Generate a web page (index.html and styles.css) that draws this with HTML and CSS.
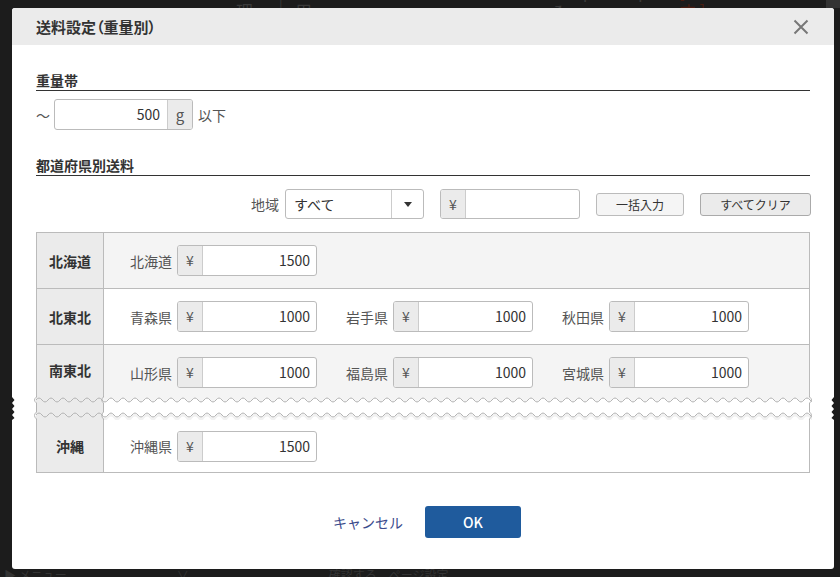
FILE: index.html
```html
<!DOCTYPE html>
<html lang="ja">
<head>
<meta charset="utf-8">
<title>送料設定（重量別）</title>
<link rel="stylesheet" href="styles.css">
</head>
<body>
<div class="bg-page">
  <div class="bg-top">
    <span class="bg-nav">管理</span><span class="bg-sep">|</span><span class="bg-nav">運用</span>
    <span class="bg-shop">SampleShop1 ↗</span>
    <span class="bg-open">[ 開店しています ]</span>
    <span class="bg-icon"></span>
  </div>
  <div class="bg-bottom">
    <span>▶ メニュー</span><span class="bg-b2">∨</span><span class="bg-b3">確認する　ページ設定</span>
  </div>
</div>

<div class="modal">
  <div class="modal-header">
    <div class="modal-title">送料設定（重量別）</div>
    <svg class="close" width="16" height="16" viewBox="0 0 16 16"><path d="M1.5 1.5 L14.5 14.5 M14.5 1.5 L1.5 14.5" stroke="#777" stroke-width="2" fill="none"/></svg>
  </div>
  <div class="modal-body">
    <div class="section-title">重量帯</div>
    <div class="weight-row">
      <span class="tilde">〜</span>
      <div class="input-group weight">
        <span class="ig-field">500</span>
        <span class="ig-addon addon-right">g</span>
      </div>
      <span class="below">以下</span>
    </div>

    <div class="section-title second">都道府県別送料</div>
    <div class="filter-row">
      <span class="filter-label">地域</span>
      <div class="select">
        <span class="select-text">すべて</span>
        <span class="select-arrow"><svg width="8" height="5" viewBox="0 0 8 5"><path d="M0 0 H8 L4 5 Z" fill="#333"/></svg></span>
      </div>
      <div class="input-group bulk">
        <span class="ig-addon">¥</span>
        <span class="ig-field"></span>
      </div>
      <button class="btn-small">一括入力</button>
      <button class="btn-small btn-clear">すべてクリア</button>
    </div>

    <div class="price-table">
      <div class="row">
        <div class="row-head">北海道</div>
        <div class="row-body alt">
          <div class="pref"><span class="pref-label">北海道</span><div class="input-group price"><span class="ig-addon">¥</span><span class="ig-field">1500</span></div></div>
        </div>
      </div>
      <div class="row">
        <div class="row-head">北東北</div>
        <div class="row-body">
          <div class="pref"><span class="pref-label">青森県</span><div class="input-group price"><span class="ig-addon">¥</span><span class="ig-field">1000</span></div></div>
          <div class="pref"><span class="pref-label">岩手県</span><div class="input-group price"><span class="ig-addon">¥</span><span class="ig-field">1000</span></div></div>
          <div class="pref"><span class="pref-label">秋田県</span><div class="input-group price"><span class="ig-addon">¥</span><span class="ig-field">1000</span></div></div>
        </div>
      </div>
      <div class="row row-cut">
        <div class="row-head head-cut">南東北</div>
        <div class="row-body alt body-cut">
          <div class="pref"><span class="pref-label">山形県</span><div class="input-group price"><span class="ig-addon">¥</span><span class="ig-field">1000</span></div></div>
          <div class="pref"><span class="pref-label">福島県</span><div class="input-group price"><span class="ig-addon">¥</span><span class="ig-field">1000</span></div></div>
          <div class="pref"><span class="pref-label">宮城県</span><div class="input-group price"><span class="ig-addon">¥</span><span class="ig-field">1000</span></div></div>
        </div>
      </div>
    </div>

    <div class="table-break">
      <svg width="822" height="24" viewBox="0 0 822 24">
        <defs>
          <pattern id="waveTop" width="12" height="8" patternUnits="userSpaceOnUse">
            <path d="M0,0 H12 V4 Q9,8 6,4 Q3,0 0,4 Z" fill="#f4f4f4"/>
            <path d="M0,4 Q3,0 6,4 Q9,8 12,4" fill="none" stroke="#b3b3b3" stroke-width="1"/>
          </pattern>
          <pattern id="waveLine" width="12" height="8" patternUnits="userSpaceOnUse">
            <path d="M0,4 Q3,0 6,4 Q9,8 12,4" fill="none" stroke="#b3b3b3" stroke-width="1"/>
          </pattern>
          <pattern id="waveLine2" width="12" height="9" patternUnits="userSpaceOnUse" y="15">
            <path d="M0,4 Q3,0 6,4 Q9,8 12,4" fill="none" stroke="#b3b3b3" stroke-width="1"/>
          </pattern>
          <pattern id="waveBottom" width="12" height="9" patternUnits="userSpaceOnUse" y="15">
            <path d="M0,4.5 Q3,0.5 6,4.5 Q9,8.5 12,4.5 V7.5 Q9,11.5 6,7.5 Q3,3.5 0,7.5 Z" fill="#f1f1f1"/>
            <path d="M0,4 Q3,0 6,4 Q9,8 12,4" fill="none" stroke="#b3b3b3" stroke-width="1"/>
          </pattern>
        </defs>
        <rect x="24" y="0" width="67" height="24" fill="#ebebeb"/>
        <rect x="91" y="0" width="707" height="8" fill="url(#waveTop)"/>
        <rect x="24" y="0" width="67" height="8" fill="url(#waveLine)"/>
        <rect x="24" y="15" width="67" height="9" fill="url(#waveLine2)"/>
        <rect x="91" y="15" width="709" height="9" fill="url(#waveBottom)"/>
        <rect x="798" y="0" width="2" height="8" fill="url(#waveLine)"/>
        <path d="M24.5,0 V1 Q20.5,4 24.5,7 V16 Q20.5,19.5 24.5,23 V24" fill="none" stroke="#b3b3b3"/>
        <path d="M91.5,0 V1 Q88,4 91.5,7 V16 Q88,19.5 91.5,23 V24" fill="none" stroke="#b3b3b3"/>
        <path d="M797.5,0 V1 Q801.5,4 797.5,7 V16 Q801.5,19.5 797.5,23 V24" fill="none" stroke="#b3b3b3"/>
        <polygon points="0,1 2.5,4 0,7 2.5,10 0,13 2.5,16 0,19 2.5,22 0,24" fill="#1c1c1c"/>
        <polygon points="822,1 819.5,4 822,7 819.5,10 822,13 819.5,16 822,19 819.5,22 822,24" fill="#1c1c1c"/>
      </svg>
    </div>

    <div class="price-table tail">
      <div class="row row-tail">
        <div class="row-head">沖縄</div>
        <div class="row-body">
          <div class="pref"><span class="pref-label">沖縄県</span><div class="input-group price"><span class="ig-addon">¥</span><span class="ig-field">1500</span></div></div>
        </div>
      </div>
    </div>

    <div class="modal-footer">
      <button class="btn-cancel">キャンセル</button>
      <button class="btn-ok">OK</button>
    </div>
  </div>
</div>
</body>
</html>
```

FILE: styles.css
```css
* {
  box-sizing: border-box;
}

html, body {
  margin: 0;
  padding: 0;
}

body {
  width: 840px;
  height: 577px;
  overflow: hidden;
  position: relative;
  background: #1c1c1c;
  font-family: "Noto Sans CJK JP", "Noto Sans", sans-serif;
  color: #333;
}

/* background page (dimmed) */
.bg-page {
  height: 577px;
  display: flex;
  flex-direction: column;
  justify-content: space-between;
}

.bg-top {
  display: flex;
  align-items: center;
  height: 20px;
  margin-top: -9px;
  padding-left: 236px;
  font-size: 17px;
  line-height: 20px;
  color: #3a3a3a;
}

.bg-sep {
  margin: 0 12px;
  color: #333;
}

.bg-shop {
  margin-left: 222px;
}

.bg-open {
  margin-left: 14px;
  color: #4a1c10;
}

.bg-icon {
  margin-left: 24px;
  width: 16px;
  height: 14px;
  background: #333;
}

.bg-bottom {
  display: flex;
  height: 12px;
  padding-left: 4px;
  font-size: 12px;
  line-height: 20px;
  color: #333;
  overflow: hidden;
}

.bg-b2 {
  margin-left: 110px;
}

.bg-b3 {
  margin-left: 140px;
}

/* modal */
.modal {
  position: absolute;
  left: 12px;
  top: 8px;
  width: 822px;
  height: 561px;
  background: #fff;
  border-radius: 3px;
  overflow: hidden;
}

.modal-header {
  height: 37px;
  background: #ebebeb;
  display: flex;
  align-items: center;
  justify-content: space-between;
  padding: 0 25px 0 24px;
}

.modal-title {
  font-size: 15px;
  font-weight: bold;
  color: #333;
  font-feature-settings: "palt";
  line-height: 20px;
}

.close {
  display: block;
}

.modal-body {
  padding: 26px 24px 0;
}

.section-title {
  font-size: 14px;
  font-weight: bold;
  line-height: 18px;
  padding-bottom: 1px;
  border-bottom: 1px solid #333;
  color: #333;
}

.section-title.second {
  margin-top: 26px;
}

.weight-row {
  display: flex;
  align-items: center;
  margin-top: 8px;
  font-size: 14px;
  color: #555;
}

.tilde {
  width: 14px;
  margin-right: 4px;
  text-align: center;
  font-size: 14px;
}

.below {
  margin-left: 5px;
}

.input-group {
  display: flex;
  height: 31px;
  border: 1px solid #bbb;
  border-radius: 3px;
  overflow: hidden;
  background: #fff;
}

.ig-field {
  flex: 1;
  text-align: right;
  padding-right: 6px;
  font-size: 14px;
  line-height: 29px;
  color: #333;
}

.ig-addon {
  width: 25px;
  flex: none;
  background: #ebebeb;
  border-right: 1px solid #ccc;
  text-align: center;
  font-size: 14px;
  line-height: 29px;
  color: #555;
}

.ig-addon.addon-right {
  border-right: none;
  border-left: 1px solid #ccc;
  font-size: 15px;
}

.input-group.weight {
  width: 139px;
}

.input-group.weight .ig-field {
  padding-right: 7px;
}

/* filter row */
.filter-row {
  display: flex;
  justify-content: flex-end;
  align-items: center;
  margin-top: 13px;
  height: 30px;
  margin-right: -1px;
}

.filter-label {
  font-size: 14px;
  color: #555;
  margin-right: 6px;
}

.select {
  display: flex;
  width: 139px;
  height: 30px;
  border: 1px solid #bbb;
  border-radius: 3px;
  background: #fff;
}

.select-text {
  flex: 1;
  padding-left: 8px;
  font-size: 14px;
  line-height: 28px;
  color: #333;
}

.select-arrow {
  width: 32px;
  border-left: 1px solid #ccc;
  display: flex;
  align-items: center;
  justify-content: center;
}

.select-arrow svg {
  display: block;
}

.input-group.bulk {
  width: 140px;
  height: 30px;
  margin-left: 16px;
}

.input-group.bulk .ig-addon,
.input-group.bulk .ig-field {
  line-height: 28px;
}

.btn-small {
  margin-left: 16px;
  width: 88px;
  height: 23px;
  padding: 0;
  border: 1px solid #bbb;
  border-radius: 3px;
  background: #f5f5f5;
  font-family: inherit;
  font-size: 12px;
  color: #333;
  line-height: 21px;
}

.btn-clear {
  width: 111px;
  background: #ebebeb;
  border-color: #aaa;
}

/* price table */
.price-table {
  margin-top: 13px;
  border: 1px solid #bbb;
  border-bottom: none;
}

.price-table.tail {
  margin-top: 0;
  border-top: none;
  border-bottom: 1px solid #bbb;
}

.row {
  display: flex;
  height: 56px;
  border-top: 1px solid #bbb;
}

.row:first-child {
  border-top: none;
  height: 55px;
}

.row.row-cut {
  height: 52px;
}

.row.row-tail {
  border-top: none;
  height: 52px;
}

.row-head {
  width: 67px;
  flex: none;
  background: #ebebeb;
  border-right: 1px solid #bbb;
  display: flex;
  align-items: center;
  justify-content: center;
  font-size: 14px;
  font-weight: bold;
  color: #333;
}

.row-head.head-cut {
  align-items: flex-start;
  padding-top: 15px;
}

.row-body {
  flex: 1;
  display: flex;
  align-items: center;
  gap: 29px;
  padding-left: 26px;
  background: #fff;
}

.row-body.alt {
  background: #f4f4f4;
}

.row-body.body-cut {
  align-items: flex-start;
  padding-top: 12px;
}

.pref {
  display: flex;
  align-items: center;
  gap: 5px;
}

.pref-label {
  font-size: 14px;
  color: #555;
}

.input-group.price {
  width: 140px;
}

.table-break {
  margin: 0 -24px;
  height: 24px;
}

.table-break svg {
  display: block;
}

/* footer */
.modal-footer {
  display: flex;
  justify-content: center;
  gap: 9px;
  margin-top: 33px;
  padding-right: 5px;
}

.btn-cancel {
  width: 96px;
  height: 32px;
  padding: 0;
  border: none;
  background: none;
  font-family: inherit;
  font-size: 14px;
  color: #3b4b8c;
}

.btn-ok {
  width: 96px;
  height: 32px;
  padding: 0;
  border: none;
  border-radius: 3px;
  background: #1f5b9d;
  font-family: inherit;
  font-size: 14px;
  font-weight: 500;
  color: #fff;
}
```
